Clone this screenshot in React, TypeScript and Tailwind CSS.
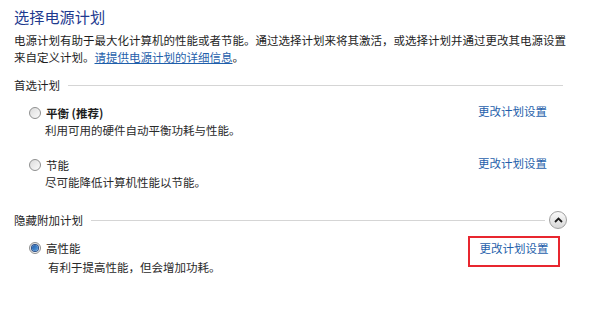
import React from 'react';

const font = { fontFamily: '"Segoe UI", "Noto Sans CJK SC", sans-serif' };

function Radio({ checked }: { checked?: boolean }) {
  return (
    <span className="flex h-[12px] w-[12px] items-center justify-center rounded-full border border-[#8e8f8f] bg-gradient-to-br from-[#dcdcdc] to-[#fbfbfb]">
      {checked && <span className="h-[6px] w-[6px] rounded-full bg-gradient-to-br from-[#1c5aa8] to-[#5aa0e0] ring-1 ring-[#2a4e88]" />}
    </span>
  );
}

function GroupHeader({ label, chevron }: { label: string; chevron?: boolean }) {
  return (
    <div className={`flex h-[18px] items-center gap-2 ${chevron ? 'pr-[33px]' : 'pr-[37px]'}`}>
      <span className="text-[#1e1e1e]">{label}</span>
      <div className="h-px flex-1 bg-[#d5d5d5]" />
      {chevron && (
        <button className="-ml-1 flex h-[18px] w-[18px] items-center justify-center rounded-full border border-[#a0a0a0] bg-gradient-to-b from-[#fafafa] to-[#d8d8d8]">
          <svg width="9" height="6" viewBox="0 0 9 6">
            <path d="M1 5 L4.5 1.5 L8 5" fill="none" stroke="#1a1a1a" strokeWidth="1.8" />
          </svg>
        </button>
      )}
    </div>
  );
}

function Plan({
  name,
  desc,
  bold,
  checked,
  boxed,
  descClass = 'pl-[31px]',
}: {
  name: string;
  desc: string;
  bold?: boolean;
  checked?: boolean;
  boxed?: boolean;
  descClass?: string;
}) {
  return (
    <div className="flex items-start pr-[53px]">
      <div className="flex-1">
        <div className="flex h-[18px] items-center gap-[5px] pl-[15px]">
          <Radio checked={checked} />
          <span className={bold ? 'font-bold text-[#1e1e1e]' : 'text-[#1e1e1e]'}>{name}</span>
        </div>
        <div className={`${descClass} h-[17px] leading-[17px] text-[#2a2a2a]`}>{desc}</div>
      </div>
      {boxed ? (
        <div className="-mr-[13px] -mt-[3px] flex h-[31px] w-[92px] items-start justify-center border-2 border-[#e8262f] pt-[2px]">
          <a className="text-[#1f5fab]">更改计划设置</a>
        </div>
      ) : (
        <a className="mt-[-1px] text-[#1f5fab]">更改计划设置</a>
      )}
    </div>
  );
}

export default function App() {
  return (
    <div className="h-[326px] w-[600px] bg-white text-[11.5px] leading-[17px]" style={font}>
      <div className="pl-[14px] pt-[6px]">
        <h1 className="text-[15.2px] leading-[20px] text-[#1e3a8f]">选择电源计划</h1>
        <p className="mt-[6px] pr-[30px] text-[#1e1e1e]">
          电源计划有助于最大化计算机的性能或者节能。通过选择计划来将其激活，或选择计划并通过更改其电源设置
          <br />
          来自定义计划。<a className="text-[#1f5fab] underline">请提供电源计划的详细信息</a>。
        </p>
        <div className="mt-[10px]">
          <GroupHeader label="首选计划" />
        </div>
        <div className="mt-[10px]">
          <Plan name="平衡 (推荐)" desc="利用可用的硬件自动平衡功耗与性能。" bold />
        </div>
        <div className="mt-[17px]">
          <Plan name="节能" desc="尽可能降低计算机性能以节能。" />
        </div>
        <div className="mt-[20px]">
          <GroupHeader label="隐藏附加计划" chevron />
        </div>
        <div className="mt-[10px]">
          <Plan name="高性能" desc="有利于提高性能，但会增加功耗。" checked boxed descClass="mt-[2px] pl-[34px]" />
        </div>
      </div>
    </div>
  );
}
